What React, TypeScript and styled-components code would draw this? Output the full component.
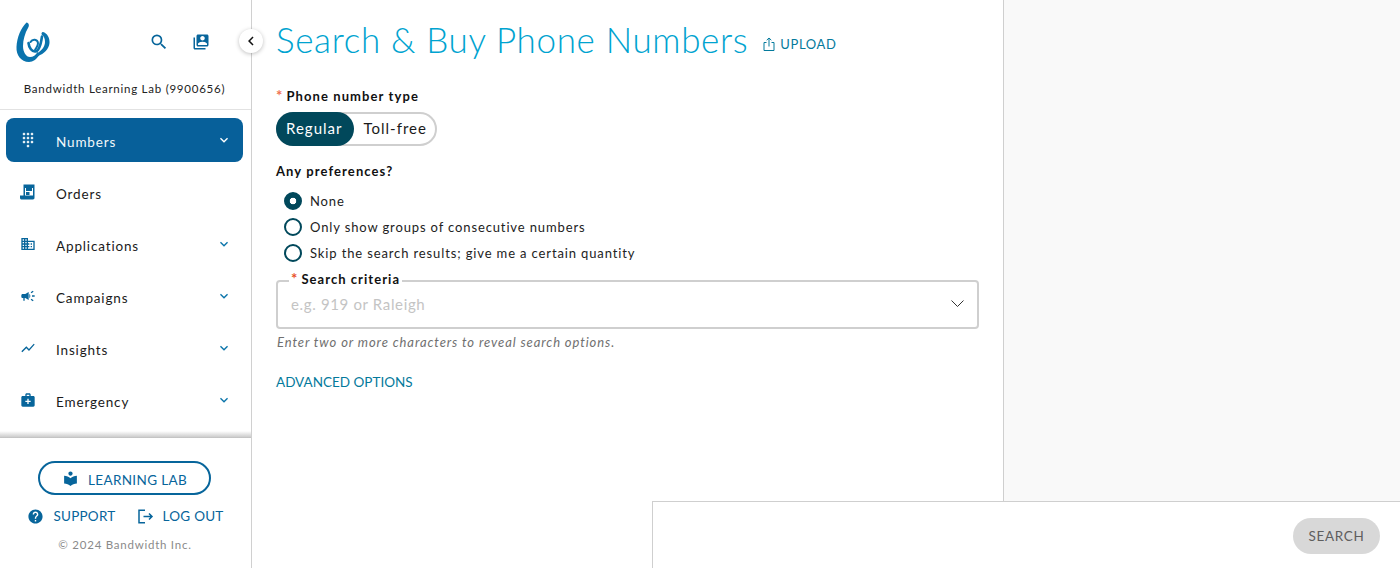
import React from "react";
import styled, { createGlobalStyle } from "styled-components";
import {
  MdSearch, MdSwitchAccount, MdDialpad, MdDomain, MdCampaign,
  MdShowChart, MdMedicalServices, MdLocalLibrary, MdHelp, MdKeyboardArrowDown, MdChevronLeft,
} from "react-icons/md";

const Global = createGlobalStyle`
  html, body { margin: 0; padding: 0; height: 100%; background: #fff; }
  body { font-family: "Lato", "Liberation Sans", sans-serif; color: #111; overflow: hidden; }
  #root { height: 100%; }
  * { box-sizing: border-box; }
`;

const Page = styled.div`
  display: flex;
  width: 1400px;
  height: 568px;
  overflow: hidden;
`;

const Sidebar = styled.aside`
  position: relative;
  width: 252px;
  flex: none;
  display: flex;
  flex-direction: column;
  border-right: 1px solid #d0d0d0;
  background: #fff;
`;

const Collapse = styled.button`
  position: absolute;
  top: 29px;
  left: 239px;
  width: 24px;
  height: 24px;
  padding: 0;
  border: 0;
  border-radius: 50%;
  background: #fff;
  color: #111;
  box-shadow: 0 1px 4px rgba(0, 0, 0, 0.25);
  display: flex;
  align-items: center;
  justify-content: center;
  z-index: 2;
`;

const Brand = styled.div`
  height: 110px;
  flex: none;
  border-bottom: 1px solid #e2e2e2;
  display: flex;
  flex-direction: column;
`;

const BrandTop = styled.div`
  display: flex;
  align-items: center;
  height: 81px;
  padding: 4px 0 0 16px;
  color: #07659b;
`;

const BrandIcons = styled.div`
  margin-left: auto;
  display: flex;
  align-items: center;
  gap: 23px;
  padding-right: 41px;
  margin-top: -2px;
`;

const Account = styled.div`
  text-align: center;
  font-size: 11.5px;
  letter-spacing: 0.75px;
  line-height: 16px;
  color: #222;
  padding-right: 2px;
`;

const Nav = styled.nav`
  flex: 1;
  display: flex;
  flex-direction: column;
  gap: 8px;
  padding: 8px 8px 0 6px;
`;

const NavItem = styled.div<{ $active?: boolean }>`
  height: 44px;
  display: flex;
  align-items: center;
  padding: 0 11px 0 14px;
  border-radius: 8px;
  background: ${(p) => (p.$active ? "#07609a" : "transparent")};
  color: ${(p) => (p.$active ? "#f3f8fb" : "#1a1a1a")};
  font-size: 13.5px;
  letter-spacing: 0.85px;
`;

const NavIcon = styled.span<{ $active?: boolean }>`
  width: 16px;
  height: 16px;
  display: flex;
  color: ${(p) => (p.$active ? "#e8f1f6" : "#07659b")};
  font-size: 16px;
`;

const NavLabel = styled.span`
  margin-left: 20px;
  flex: 1;
  padding-top: 4px;
`;

const NavChevron = styled.span<{ $active?: boolean }>`
  display: flex;
  margin-left: auto;
  margin-top: -1px;
  font-size: 16px;
  color: ${(p) => (p.$active ? "#fff" : "#0a74aa")};
`;

const Footer = styled.div`
  height: 131px;
  flex: none;
  border-top: 1px solid #e6e6e6;
  position: relative;
  display: flex;
  flex-direction: column;
  align-items: center;
  padding-top: 23px;
  &::before {
    content: "";
    position: absolute;
    left: 0;
    right: 0;
    top: -7px;
    height: 7px;
    background: linear-gradient(to bottom, rgba(200, 200, 200, 0), rgba(190, 190, 190, 0.9));
  }
`;

const LabButton = styled.button`
  width: 173px;
  height: 34px;
  margin-left: -2px;
  border: 2px solid #07659b;
  border-radius: 17px;
  background: #fff;
  color: #07659b;
  display: flex;
  align-items: center;
  justify-content: center;
  gap: 9px;
  font: inherit;
  font-size: 13.5px;
  letter-spacing: 0.35px;
  padding: 0;
`;

const LabText = styled.span`
  padding-top: 4px;
`;

const FooterLinks = styled.div`
  display: flex;
  gap: 21px;
  margin-top: 12px;
  margin-left: 0;
`;

const FooterLink = styled.a`
  display: flex;
  align-items: center;
  gap: 9px;
  color: #07659b;
  font-size: 13.5px;
  letter-spacing: 0.25px;
  line-height: 18px;
`;

const Copy = styled.div`
  margin-top: 13px;
  margin-left: -1px;
  font-size: 11.5px;
  letter-spacing: 0.75px;
  color: #8a8a8a;
`;

const Main = styled.main`
  width: 752px;
  flex: none;
  border-right: 1px solid #cfcfcf;
  padding: 18px 24px 0 24px;
`;

const TitleRow = styled.div`
  display: flex;
  align-items: center;
  height: 43px;
  gap: 15px;
`;

const Title = styled.h1`
  margin: 0;
  font-size: 35px;
  font-weight: 300;
  letter-spacing: 0.65px;
  color: #00a3d0;
  line-height: 43px;
  white-space: nowrap;
`;

const Upload = styled.a`
  display: flex;
  align-items: center;
  gap: 5px;
  color: #047a9c;
  font-size: 13px;
  letter-spacing: 0.6px;
  margin-top: 8px;
`;

const Label = styled.div`
  font-size: 13px;
  font-weight: 700;
  letter-spacing: 1.1px;
  line-height: 18px;
  color: #111;
`;

const TypeLabel = styled(Label)`
  margin-top: 26px;
`;

const Star = styled.span<{ $strong?: boolean }>`
  color: ${(p) => (p.$strong ? "#e8502a" : "#f0704f")};
  font-weight: 700;
  font-size: 15px;
  letter-spacing: 0;
  line-height: 0;
  margin-right: 4px;
`;

const Toggle = styled.div`
  display: inline-flex;
  margin-top: 7px;
  height: 34px;
  border: 2px solid #cfcfcf;
  border-radius: 17px;
  align-items: center;
  font-size: 15px;
  letter-spacing: 1px;
`;

const ToggleOption = styled.span<{ $on?: boolean }>`
  height: 34px;
  padding: ${(p) => (p.$on ? "0 12px 2px 10px" : "0 8px 2px 9px")};
  margin-left: ${(p) => (p.$on ? "-2px" : "0")};
  border-radius: 17px;
  display: flex;
  align-items: center;
  background: ${(p) => (p.$on ? "#01485b" : "transparent")};
  color: ${(p) => (p.$on ? "#fff" : "#1a1a1a")};
`;

const PrefLabel = styled(Label)`
  margin-top: 16px;
`;

const RadioList = styled.div`
  margin-top: 12px;
  display: flex;
  flex-direction: column;
  gap: 8px;
  padding-left: 8px;
`;

const RadioRow = styled.label`
  display: flex;
  align-items: center;
  gap: 8px;
  height: 18px;
  font-size: 13px;
  letter-spacing: 0.87px;
  color: #222;
`;

const RadioDot = styled.span<{ $on?: boolean }>`
  width: 18px;
  height: 18px;
  border-radius: 50%;
  border: 2px solid #01485b;
  background: ${(p) => (p.$on ? "radial-gradient(circle, #fff 0 3px, #01485b 3.6px)" : "#fff")};
`;

const Field = styled.fieldset`
  margin: 9px 0 0;
  height: 58px;
  width: 703px;
  padding: 0 14px;
  border: 2px solid #cfcfcf;
  border-radius: 4px;
  display: flex;
  align-items: flex-start;
  justify-content: space-between;
`;

const Legend = styled.legend`
  padding: 0 2px 4px;
  margin-left: -3px;
  font-size: 13px;
  font-weight: 700;
  letter-spacing: 1.05px;
  line-height: 16px;
  color: #111;
`;

const Placeholder = styled.span`
  font-size: 15px;
  letter-spacing: 0.65px;
  line-height: 24px;
  color: #c4c4c4;
  margin-top: 1px;
  margin-left: -1px;
`;

const Caret = styled.svg`
  margin-top: 9px;
  margin-right: -1px;
  width: 13px;
  height: 7px;
  display: block;
`;

const Hint = styled.div`
  margin-top: 4px;
  font-size: 13px;
  font-style: italic;
  letter-spacing: 0.9px;
  line-height: 18px;
  color: #707070;
  padding-left: 1px;
`;

const Advanced = styled.a`
  display: block;
  margin-top: 22px;
  color: #047a9c;
  font-size: 13.5px;
  letter-spacing: 0;
  line-height: 18px;
`;

const Preview = styled.div`
  flex: 1;
  background: #f9f9f9;
`;

const ActionBar = styled.div`
  position: fixed;
  left: 652px;
  right: 0;
  bottom: 0;
  height: 67px;
  background: #fff;
  border-top: 1px solid #cfcfcf;
  border-left: 1px solid #cfcfcf;
  display: flex;
  justify-content: flex-end;
  padding: 16px 20px 0 0;
`;

const SearchButton = styled.button`
  width: 87px;
  height: 36px;
  border: 0;
  border-radius: 18px;
  background: #d8d8d8;
  color: #5e5e5e;
  font: inherit;
  font-size: 13.5px;
  letter-spacing: 0.65px;
  padding: 0;
`;

const Logo = () => (
  <svg width="35" height="41" viewBox="0 0 35 41" aria-hidden>
    <g fill="#0a73ad">
      <path d="M10.500 .5C13 1 13.500 3.500 12 6 9 11 7 18 7 24c0 6 3 11 7 11 3 0 6-2 7.500-5l2.500 2c-3 5-7 8-11 8-8 0-13-7-12.500-15C1 15 5 6 10.500 .5z" />
      <path d="M27 10c4 1 7 6 6.500 11-.5 6-5.500 11-11.500 13l-1-2.500c4-2.500 8-6.500 8-11.500 0-3-1-6-3-7-1-1-.5-3 1-3z" />
    </g>
    <g fill="none" stroke="#0a73ad" strokeLinecap="round">
      <path strokeWidth="2.600" d="M12.500 21c.5 5 3.500 9 7 8.500 3.500-.5 5.500-8 6.500-15" />
      <path strokeWidth="2" d="M14.500 20c2-3.500 7-3 7.500 1 .3 2.500-1.500 4.500-3 7" />
    </g>
  </svg>
);

const OrdersIcon = () => (
  <svg width="16" height="16" viewBox="0 0 16 16" aria-hidden>
    <path
      fill="currentColor"
      fillRule="evenodd"
      d="M3.500 .5h11v13.300c0 .9-.6 1.700-1.500 1.700H1.500C.7 15.500 0 14.900 0 14v-2.500h3.500zM5 3v8.500h8V3zM6 4h6v3H6z"
    />
    <path fill="currentColor" d="M5 3h8v1H5zM6 8h3.500v3H6z" />
  </svg>
);

const navItems = [
  { label: "Numbers", icon: <MdDialpad />, active: true, more: true },
  { label: "Orders", icon: <OrdersIcon />, more: false },
  { label: "Applications", icon: <MdDomain />, more: true },
  { label: "Campaigns", icon: <MdCampaign />, more: true },
  { label: "Insights", icon: <MdShowChart />, more: true },
  { label: "Emergency", icon: <MdMedicalServices />, more: true },
];

const radios = [
  { label: "None", on: true },
  { label: "Only show groups of consecutive numbers" },
  { label: "Skip the search results; give me a certain quantity" },
];

export default function App() {
  return (
    <Page>
      <Global />
      <Sidebar>
        <Collapse aria-label="Collapse"><MdChevronLeft size={18} /></Collapse>
        <Brand>
          <BrandTop>
            <Logo />
            <BrandIcons>
              <MdSearch size={20} />
              <MdSwitchAccount size={18} />
            </BrandIcons>
          </BrandTop>
          <Account>Bandwidth Learning Lab (9900656)</Account>
        </Brand>
        <Nav>
          {navItems.map((n) => (
            <NavItem key={n.label} $active={n.active}>
              <NavIcon $active={n.active}>{n.icon}</NavIcon>
              <NavLabel>{n.label}</NavLabel>
              {n.more && (
                <NavChevron $active={n.active}><MdKeyboardArrowDown /></NavChevron>
              )}
            </NavItem>
          ))}
        </Nav>
        <Footer>
          <LabButton><MdLocalLibrary size={17} /><LabText>LEARNING LAB</LabText></LabButton>
          <FooterLinks>
            <FooterLink><MdHelp size={17} />SUPPORT</FooterLink>
            <FooterLink>
              <svg width="17" height="17" viewBox="0 0 17 17" fill="none" stroke="#07659b" strokeWidth="1.500">
                <path d="M8 2.200H2v12.600h6M6.500 8.500h8.500M12 5.500l3 3-3 3" />
              </svg>
              LOG OUT
            </FooterLink>
          </FooterLinks>
          <Copy>© 2024 Bandwidth Inc.</Copy>
        </Footer>
      </Sidebar>
      <Main>
        <TitleRow>
          <Title>Search &amp; Buy Phone Numbers</Title>
          <Upload>
            <svg width="12" height="14" viewBox="0 0 12 14" fill="none" stroke="#047a9c" strokeWidth="1">
              <path d="M3.500 5.500H1v8h10v-8H8.500M6 9.500V1M3.700 3.200 6 1l2.300 2.200" />
            </svg>
            UPLOAD
          </Upload>
        </TitleRow>
        <TypeLabel><Star>*</Star>Phone number type</TypeLabel>
        <Toggle>
          <ToggleOption $on>Regular</ToggleOption>
          <ToggleOption>Toll-free</ToggleOption>
        </Toggle>
        <PrefLabel>Any preferences?</PrefLabel>
        <RadioList>
          {radios.map((r) => (
            <RadioRow key={r.label}>
              <RadioDot $on={r.on} />
              {r.label}
            </RadioRow>
          ))}
        </RadioList>
        <Field>
          <Legend><Star $strong>*</Star>Search criteria</Legend>
          <Placeholder>e.g. 919 or Raleigh</Placeholder>
          <Caret viewBox="0 0 13 7" fill="none" stroke="#333" strokeWidth="1">
            <path d="M.5 .5l6 6 6-6" />
          </Caret>
        </Field>
        <Hint>Enter two or more characters to reveal search options.</Hint>
        <Advanced>ADVANCED OPTIONS</Advanced>
      </Main>
      <Preview />
      <ActionBar>
        <SearchButton>SEARCH</SearchButton>
      </ActionBar>
    </Page>
  );
}
